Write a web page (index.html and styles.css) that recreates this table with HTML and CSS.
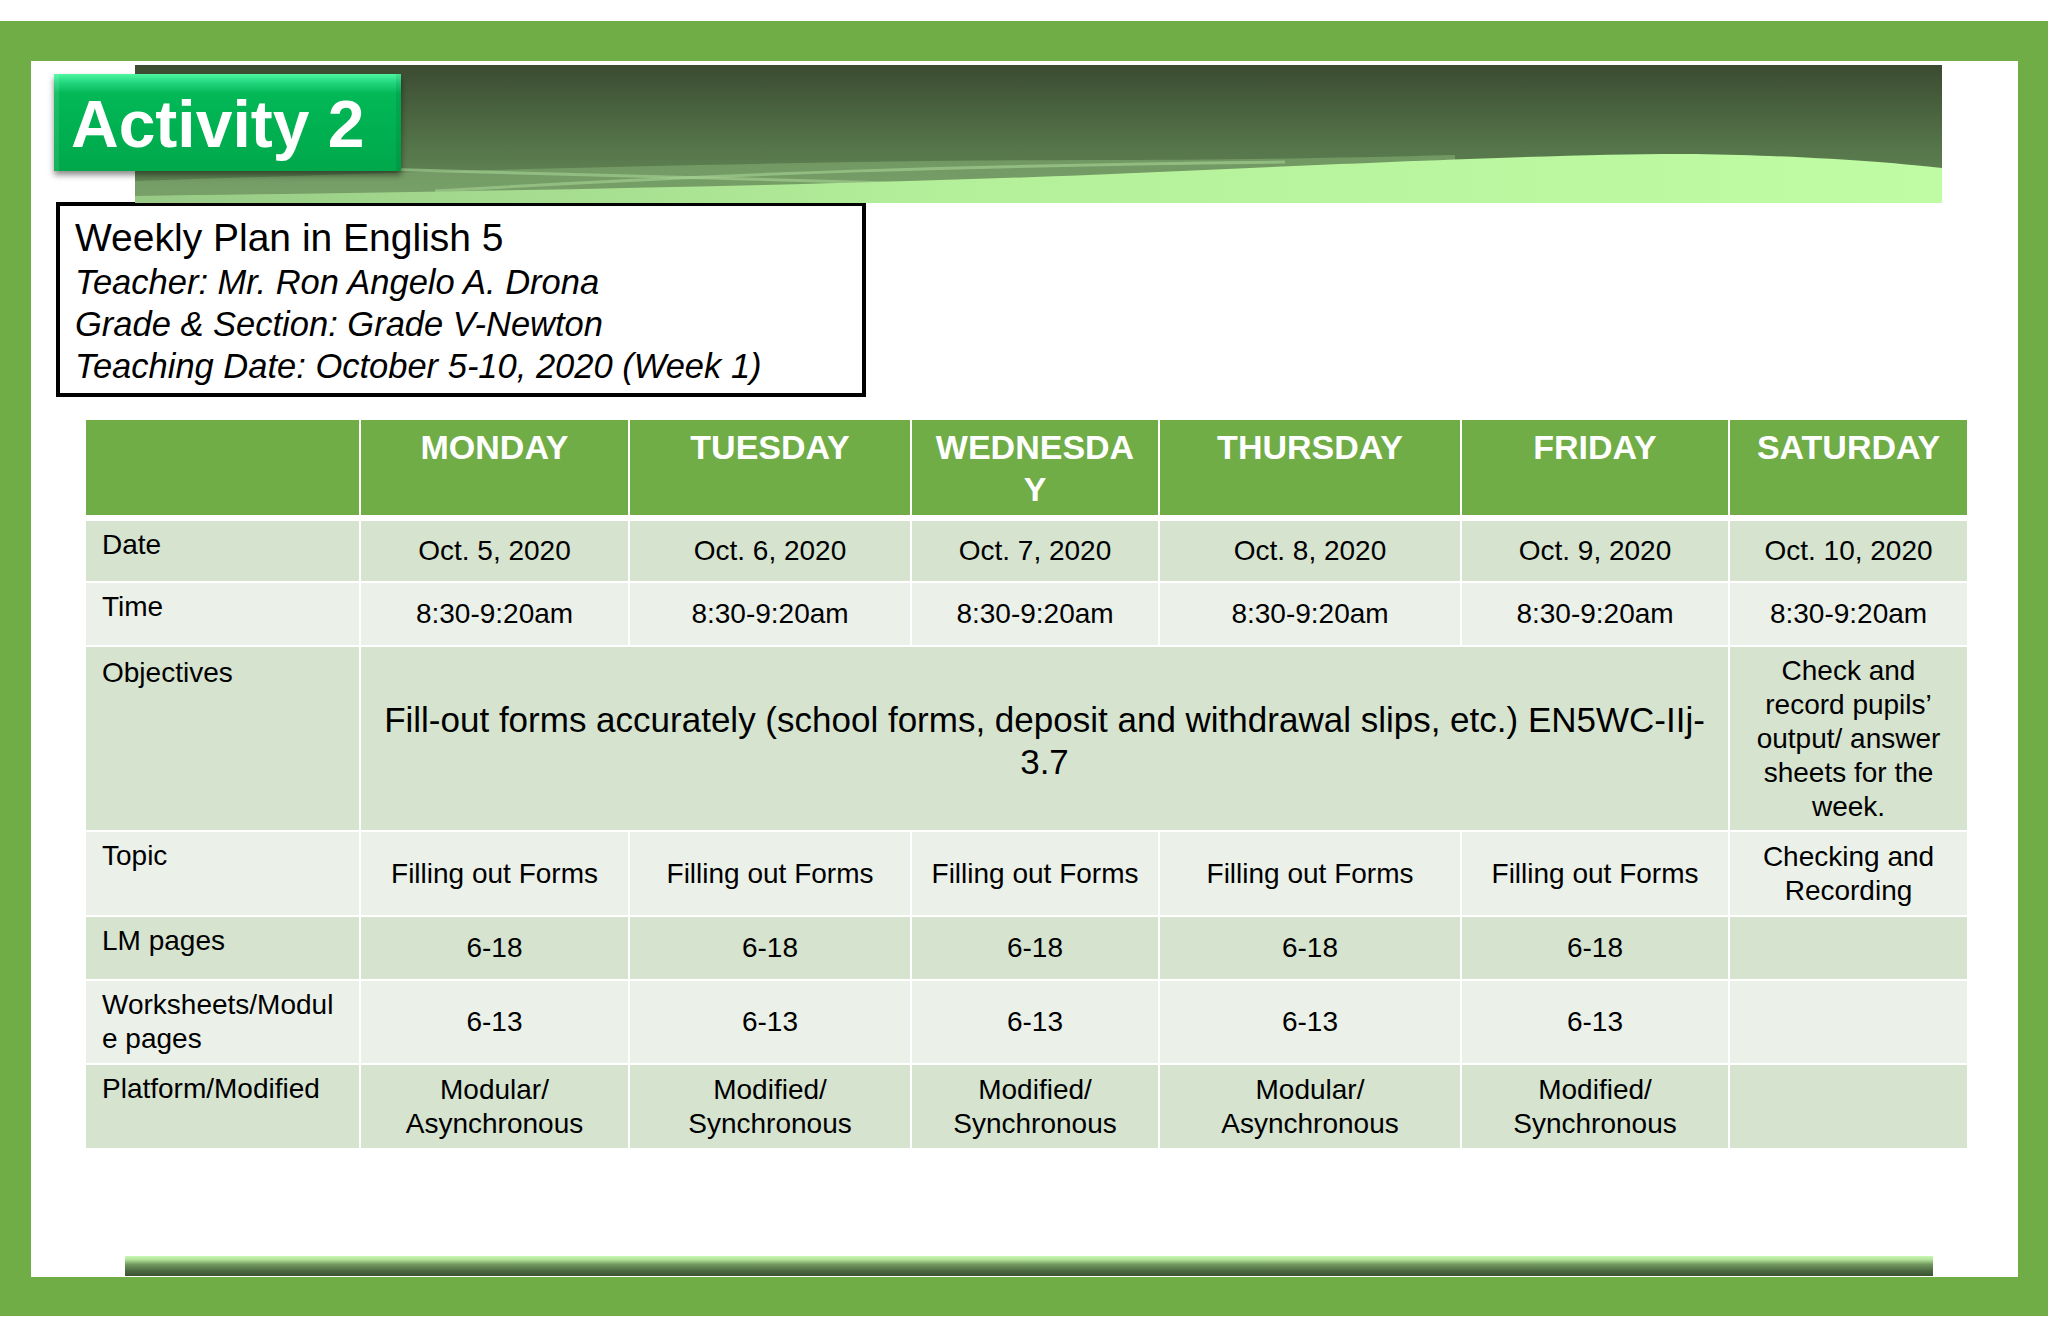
FILE: index.html
```html
<!DOCTYPE html>
<html lang="en">
<head>
<meta charset="utf-8">
<title>Activity 2 - Weekly Plan in English 5</title>
<link rel="stylesheet" href="styles.css">
</head>
<body>
<div class="frame">
  <div class="inner">
    <header class="top">
      <div class="banner">
        <svg class="banner-art" viewBox="0 0 1807 138" preserveAspectRatio="none" aria-hidden="true">
          <defs>
            <linearGradient id="bg" x1="0" y1="0" x2="0" y2="1">
              <stop offset="0" stop-color="#3b4b31"/>
              <stop offset="0.45" stop-color="#4f6b44"/>
              <stop offset="1" stop-color="#678f5b"/>
            </linearGradient>
            <linearGradient id="wave" x1="0" y1="0" x2="1" y2="0">
              <stop offset="0" stop-color="#97c985"/>
              <stop offset="0.45" stop-color="#b4f09a"/>
              <stop offset="1" stop-color="#bffca3"/>
            </linearGradient>
          </defs>
          <rect x="0" y="0" width="1807" height="138" fill="url(#bg)"/>
          <path d="M0,116 C250,108 600,96 950,95 C1100,95 1200,93 1320,90 L1320,138 L0,138 Z" fill="#86b074" opacity="0.55"/>
          <path d="M240,104 C500,112 800,122 1120,128" stroke="#a6d394" stroke-width="3" fill="none" opacity="0.6"/>
          <path d="M300,126 C600,108 850,100 1150,97" stroke="#a6d394" stroke-width="3" fill="none" opacity="0.6"/>
          <path d="M0,131 C300,127 700,121 1000,108 C1250,97 1450,88 1560,89 C1680,91 1760,98 1807,103 L1807,138 L0,138 Z" fill="url(#wave)"/>
        </svg>
      </div>
      <div class="badge">Activity 2</div>
    </header>

    <section class="info">
      <div class="info-title">Weekly Plan in English 5</div>
      <div class="info-line">Teacher: Mr. Ron Angelo A. Drona</div>
      <div class="info-line">Grade &amp; Section: Grade V-Newton</div>
      <div class="info-line">Teaching Date: October 5-10, 2020 (Week 1)</div>
    </section>

    <table class="plan">
      <colgroup>
        <col class="c-label"><col class="c-mon"><col class="c-tue"><col class="c-wed"><col class="c-thu"><col class="c-fri"><col class="c-sat">
      </colgroup>
      <thead>
        <tr class="r-head">
          <th></th><th>MONDAY</th><th>TUESDAY</th><th class="th-wrap">WEDNESDAY</th><th>THURSDAY</th><th>FRIDAY</th><th class="last">SATURDAY</th>
        </tr>
      </thead>
      <tbody>
        <tr class="r-date band">
          <th class="lbl">Date</th><td>Oct. 5, 2020</td><td>Oct. 6, 2020</td><td>Oct. 7, 2020</td><td>Oct. 8, 2020</td><td>Oct. 9, 2020</td><td class="last">Oct. 10, 2020</td>
        </tr>
        <tr class="r-time light">
          <th class="lbl">Time</th><td>8:30-9:20am</td><td>8:30-9:20am</td><td>8:30-9:20am</td><td>8:30-9:20am</td><td>8:30-9:20am</td><td class="last">8:30-9:20am</td>
        </tr>
        <tr class="r-obj band">
          <th class="lbl">Objectives</th><td colspan="5" class="obj">Fill-out forms accurately (school forms, deposit and withdrawal slips, etc.) EN5WC-IIj-3.7</td><td class="last">Check and record pupils’ output/ answer sheets for the week.</td>
        </tr>
        <tr class="r-topic light">
          <th class="lbl">Topic</th><td>Filling out Forms</td><td>Filling out Forms</td><td>Filling out Forms</td><td>Filling out Forms</td><td>Filling out Forms</td><td class="last">Checking and Recording</td>
        </tr>
        <tr class="r-lm band">
          <th class="lbl">LM pages</th><td>6-18</td><td>6-18</td><td>6-18</td><td>6-18</td><td>6-18</td><td class="last"></td>
        </tr>
        <tr class="r-ws light">
          <th class="lbl">Worksheets/Module pages</th><td>6-13</td><td>6-13</td><td>6-13</td><td>6-13</td><td>6-13</td><td class="last"></td>
        </tr>
        <tr class="r-plat band">
          <th class="lbl">Platform/Modified</th><td>Modular/ Asynchronous</td><td>Modified/ Synchronous</td><td>Modified/ Synchronous</td><td>Modular/ Asynchronous</td><td>Modified/ Synchronous</td><td class="last"></td>
        </tr>
      </tbody>
    </table>

    <div class="footer-bar"></div>
  </div>
</div>
</body>
</html>
```

FILE: styles.css
```css
html, body {
  margin: 0;
  padding: 0;
  background: #ffffff;
}

body {
  width: 2048px;
  height: 1339px;
  overflow: hidden;
  font-family: "Liberation Sans", Arial, sans-serif;
  color: #000;
}

.frame {
  margin-top: 21px;
  height: 1295px;
  box-sizing: border-box;
  border-style: solid;
  border-color: #70ad47;
  border-width: 40px 30px 39px 31px;
}

.inner {
  height: 100%;
  display: flex;
  flex-direction: column;
  background: #ffffff;
}

/* ---------- header banner ---------- */
.top {
  position: relative;
  padding: 4px 0 0 104px;
}

.banner {
  width: 1807px;
  height: 138px;
}

.banner-art {
  display: block;
  width: 100%;
  height: 100%;
}

.badge {
  position: absolute;
  left: 23px;
  top: 13px;
  width: 347px;
  height: 97px;
  box-sizing: border-box;
  padding-left: 17px;
  color: #ffffff;
  font-weight: bold;
  font-size: 66px;
  line-height: 100px;
  white-space: nowrap;
  overflow: hidden;
  background: linear-gradient(to bottom, #4cf7a0 0%, #22d67e 9%, #03b857 20%, #00b050 60%, #00a84b 100%);
  box-shadow: 0 4px 6px rgba(0, 0, 0, 0.45),
              inset 5px 0 0 rgba(255, 255, 255, 0.10),
              inset -5px 0 0 rgba(0, 0, 0, 0.08);
}

/* ---------- info box ---------- */
.info {
  margin: -1px 0 0 25px;
  width: 810px;
  height: 195px;
  box-sizing: border-box;
  border: 4px solid #000;
  padding: 8px 14px 0 15px;
  background: #ffffff;
}

.info-title {
  font-size: 39px;
  line-height: 47px;
}

.info-line {
  font-size: 34.5px;
  line-height: 42px;
  font-style: italic;
}

/* ---------- table ---------- */
.plan {
  margin: 23px 0 0 55px;
  width: 1881px;
  table-layout: fixed;
  border-collapse: separate;
  border-spacing: 0;
  font-size: 28px;
  line-height: 34px;
}

.c-label { width: 275px; }
.c-mon { width: 269px; }
.c-tue { width: 282px; }
.c-wed { width: 248px; }
.c-thu { width: 302px; }
.c-fri { width: 268px; }
.c-sat { width: 237px; }

.plan th,
.plan td {
  padding: 0 17px;
  border-right: 2px solid #ffffff;
  border-bottom: 2px solid #ffffff;
  text-align: center;
  vertical-align: middle;
}

.plan .last {
  border-right: 0;
}

.r-head th {
  background: #70ad47;
  color: #ffffff;
  font-weight: bold;
  font-size: 34px;
  line-height: 42px;
  vertical-align: top;
  padding-top: 6px;
  border-bottom: 6px solid #ffffff;
}

.th-wrap {
  word-break: break-all;
}

.plan th.lbl {
  font-weight: normal;
  text-align: left;
  vertical-align: top;
  padding: 7px 21px 0 16px;
  word-break: break-all;
}

.band th,
.band td {
  background: #d5e3cf;
}

.light th,
.light td {
  background: #ebf1e9;
}

.r-head { height: 101px; }
.r-date { height: 62px; }
.r-time { height: 64px; }
.r-obj { height: 185px; }
.r-topic { height: 85px; }
.r-lm { height: 64px; }
.r-ws { height: 84px; }
.r-plat { height: 83px; }

.r-plat th,
.r-plat td {
  border-bottom: 0;
}

.r-obj th.lbl {
  padding-top: 9px;
}

.plan td.obj {
  font-size: 35px;
  line-height: 42px;
  padding: 4px 12px 0;
}

/* ---------- footer bar ---------- */
.footer-bar {
  margin: auto 0 1px 94px;
  width: 1808px;
  height: 20px;
  background: linear-gradient(to bottom, #c9f9b2 0%, #b3e39b 18%, #74995f 42%, #4e6c43 72%, #3b5031 100%);
}
```
